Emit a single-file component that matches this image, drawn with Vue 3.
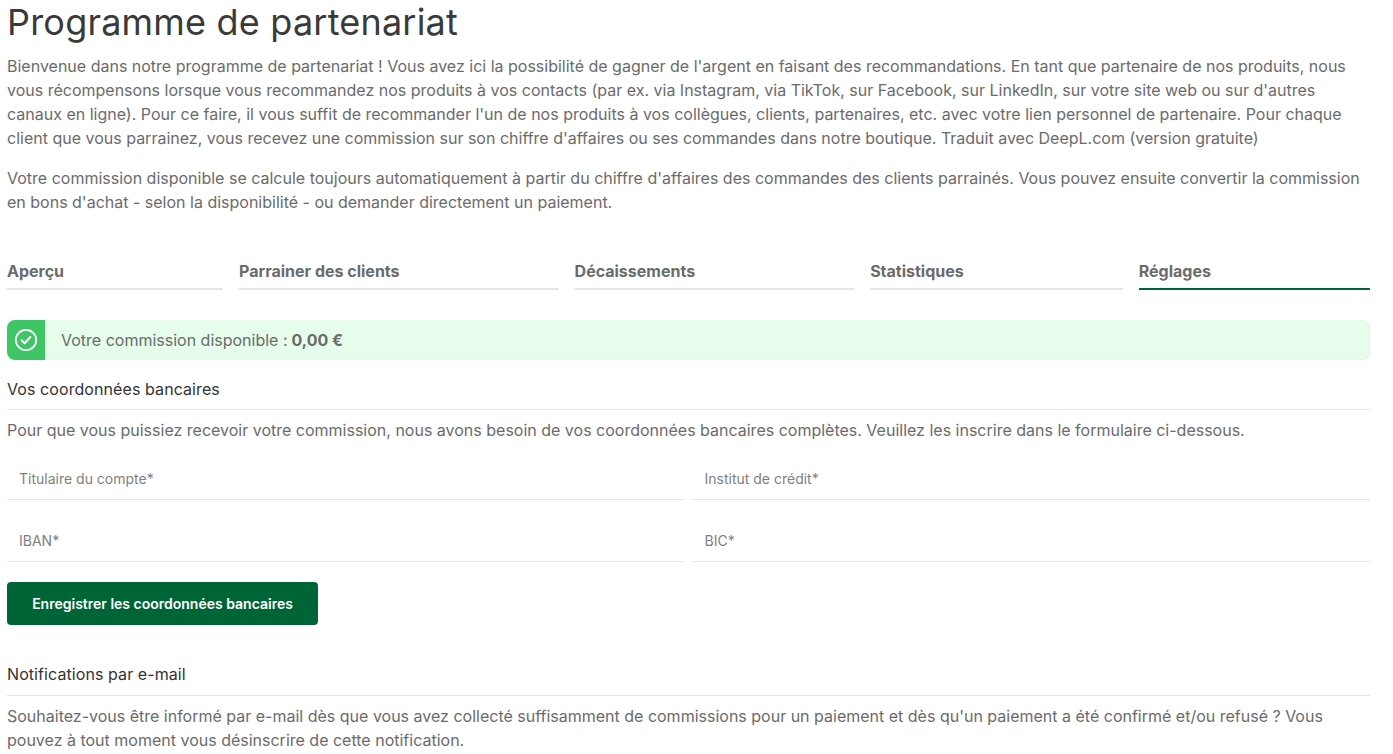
<template>
  <main class="page">
    <h1>Programme de partenariat</h1>
    <p class="intro">Bienvenue dans notre programme de partenariat ! Vous avez ici la possibilité de gagner de l'argent en faisant des recommandations. En tant que partenaire de nos produits, nous vous récompensons lorsque vous recommandez nos produits à vos contacts (par ex. via Instagram, via TikTok, sur Facebook, sur LinkedIn, sur votre site web ou sur d'autres canaux en ligne). Pour ce faire, il vous suffit de recommander l'un de nos produits à vos collègues, clients, partenaires, etc. avec votre lien personnel de partenaire. Pour chaque client que vous parrainez, vous recevez une commission sur son chiffre d'affaires ou ses commandes dans notre boutique. Traduit avec DeepL.com (version gratuite)</p>
    <p class="intro second">Votre commission disponible se calcule toujours automatiquement à partir du chiffre d'affaires des commandes des clients parrainés. Vous pouvez ensuite convertir la commission en bons d'achat - selon la disponibilité - ou demander directement un paiement.</p>

    <nav class="tabs">
      <a v-for="tab in tabs" :key="tab" class="tab" :class="{ active: tab === 'Réglages' }">{{ tab }}</a>
    </nav>

    <div class="alert">
      <div class="alert-icon">
        <svg width="24" height="24" viewBox="0 0 24 24" fill="none" stroke="#fff" stroke-width="1.8" stroke-linecap="round" stroke-linejoin="round">
          <circle cx="12" cy="12" r="10.2" />
          <path d="M7.6 12.3l3 2.9 5.8-6.2" stroke-width="2" />
        </svg>
      </div>
      <div class="alert-text">Votre commission disponible : <strong>0,00 €</strong></div>
    </div>

    <h2 class="section-title">Vos coordonnées bancaires</h2>
    <p class="section-text">Pour que vous puissiez recevoir votre commission, nous avons besoin de vos coordonnées bancaires complètes. Veuillez les inscrire dans le formulaire ci-dessous.</p>

    <form class="form" @submit.prevent>
      <input v-for="field in fields" :key="field" class="field" type="text" :placeholder="field" />
    </form>

    <button class="save" type="button">Enregistrer les coordonnées bancaires</button>

    <h2 class="section-title notif">Notifications par e-mail</h2>
    <p class="section-text">Souhaitez-vous être informé par e-mail dès que vous avez collecté suffisamment de commissions pour un paiement et dès qu'un paiement a été confirmé et/ou refusé ? Vous pouvez à tout moment vous désinscrire de cette notification.</p>
  </main>
</template>

<script setup>
const tabs = ['Aperçu', 'Parrainer des clients', 'Décaissements', 'Statistiques', 'Réglages']
const fields = ['Titulaire du compte*', 'Institut de crédit*', 'IBAN*', 'BIC*']
</script>

<style scoped>
.page {
  box-sizing: border-box;
  height: 754px;
  padding: 0 23px 0 7px;
  font-family: Inter, "Liberation Sans", sans-serif;
  font-size: 16px;
  line-height: 24px;
  color: #6b6b6b;
}
h1 {
  margin: 0 0 10px;
  font-size: 36px;
  line-height: 44px;
  font-weight: 400;
  letter-spacing: 0.2px;
  color: #3a3a3a;
}
.intro {
  margin: 0;
}
.second {
  margin-top: 16px;
}
.tabs {
  display: flex;
  gap: 16px;
  margin-top: 32px;
}
.tab {
  flex: 1 1 auto;
  padding: 13px 0 5px;
  border-bottom: 2px solid #e5e5e5;
  font-weight: 700;
  color: #6b6b6b;
}
.tab.active {
  border-bottom-color: #006536;
}
.alert {
  display: flex;
  align-items: stretch;
  height: 40px;
  margin-top: 30px;
  border-radius: 8px;
  background: #e5fdea;
  box-shadow: inset -1px 0 0 #dcf8e3, inset 0 -1px 0 #dffae6;
  overflow: hidden;
}
.alert-icon {
  display: flex;
  align-items: center;
  justify-content: center;
  width: 38px;
  background: #3ec565;
}
.alert-text {
  display: flex;
  align-items: center;
  gap: 4px;
  padding-left: 16px;
}
.alert-text strong {
  font-weight: 700;
}
.section-title {
  margin: 0;
  padding: 17px 0 8px;
  border-bottom: 1px solid #e5e5e5;
  font-size: 16px;
  line-height: 24px;
  font-weight: 400;
  letter-spacing: 0.08px;
  color: #333;
}
.section-text {
  margin: 8px 0 0;
}
.form {
  display: grid;
  grid-template-columns: 676.5px 1fr;
  column-gap: 9px;
  row-gap: 21px;
  margin-top: 17px;
}
.field {
  box-sizing: border-box;
  width: 100%;
  height: 41px;
  padding: 0 12px 1px;
  border: 0;
  border-bottom: 1px solid #e5e5e5;
  outline: none;
  font: inherit;
  font-size: 14px;
  color: #666;
  background: transparent;
}
.field::placeholder {
  color: #808080;
  opacity: 1;
}
.save {
  display: block;
  width: 311px;
  height: 43px;
  margin-top: 20px;
  border: 0;
  border-radius: 4px;
  background: #006536;
  color: #fff;
  font-family: inherit;
  font-size: 14px;
  font-weight: 600;
}
.notif {
  padding: 37px 0 9px;
}
</style>
